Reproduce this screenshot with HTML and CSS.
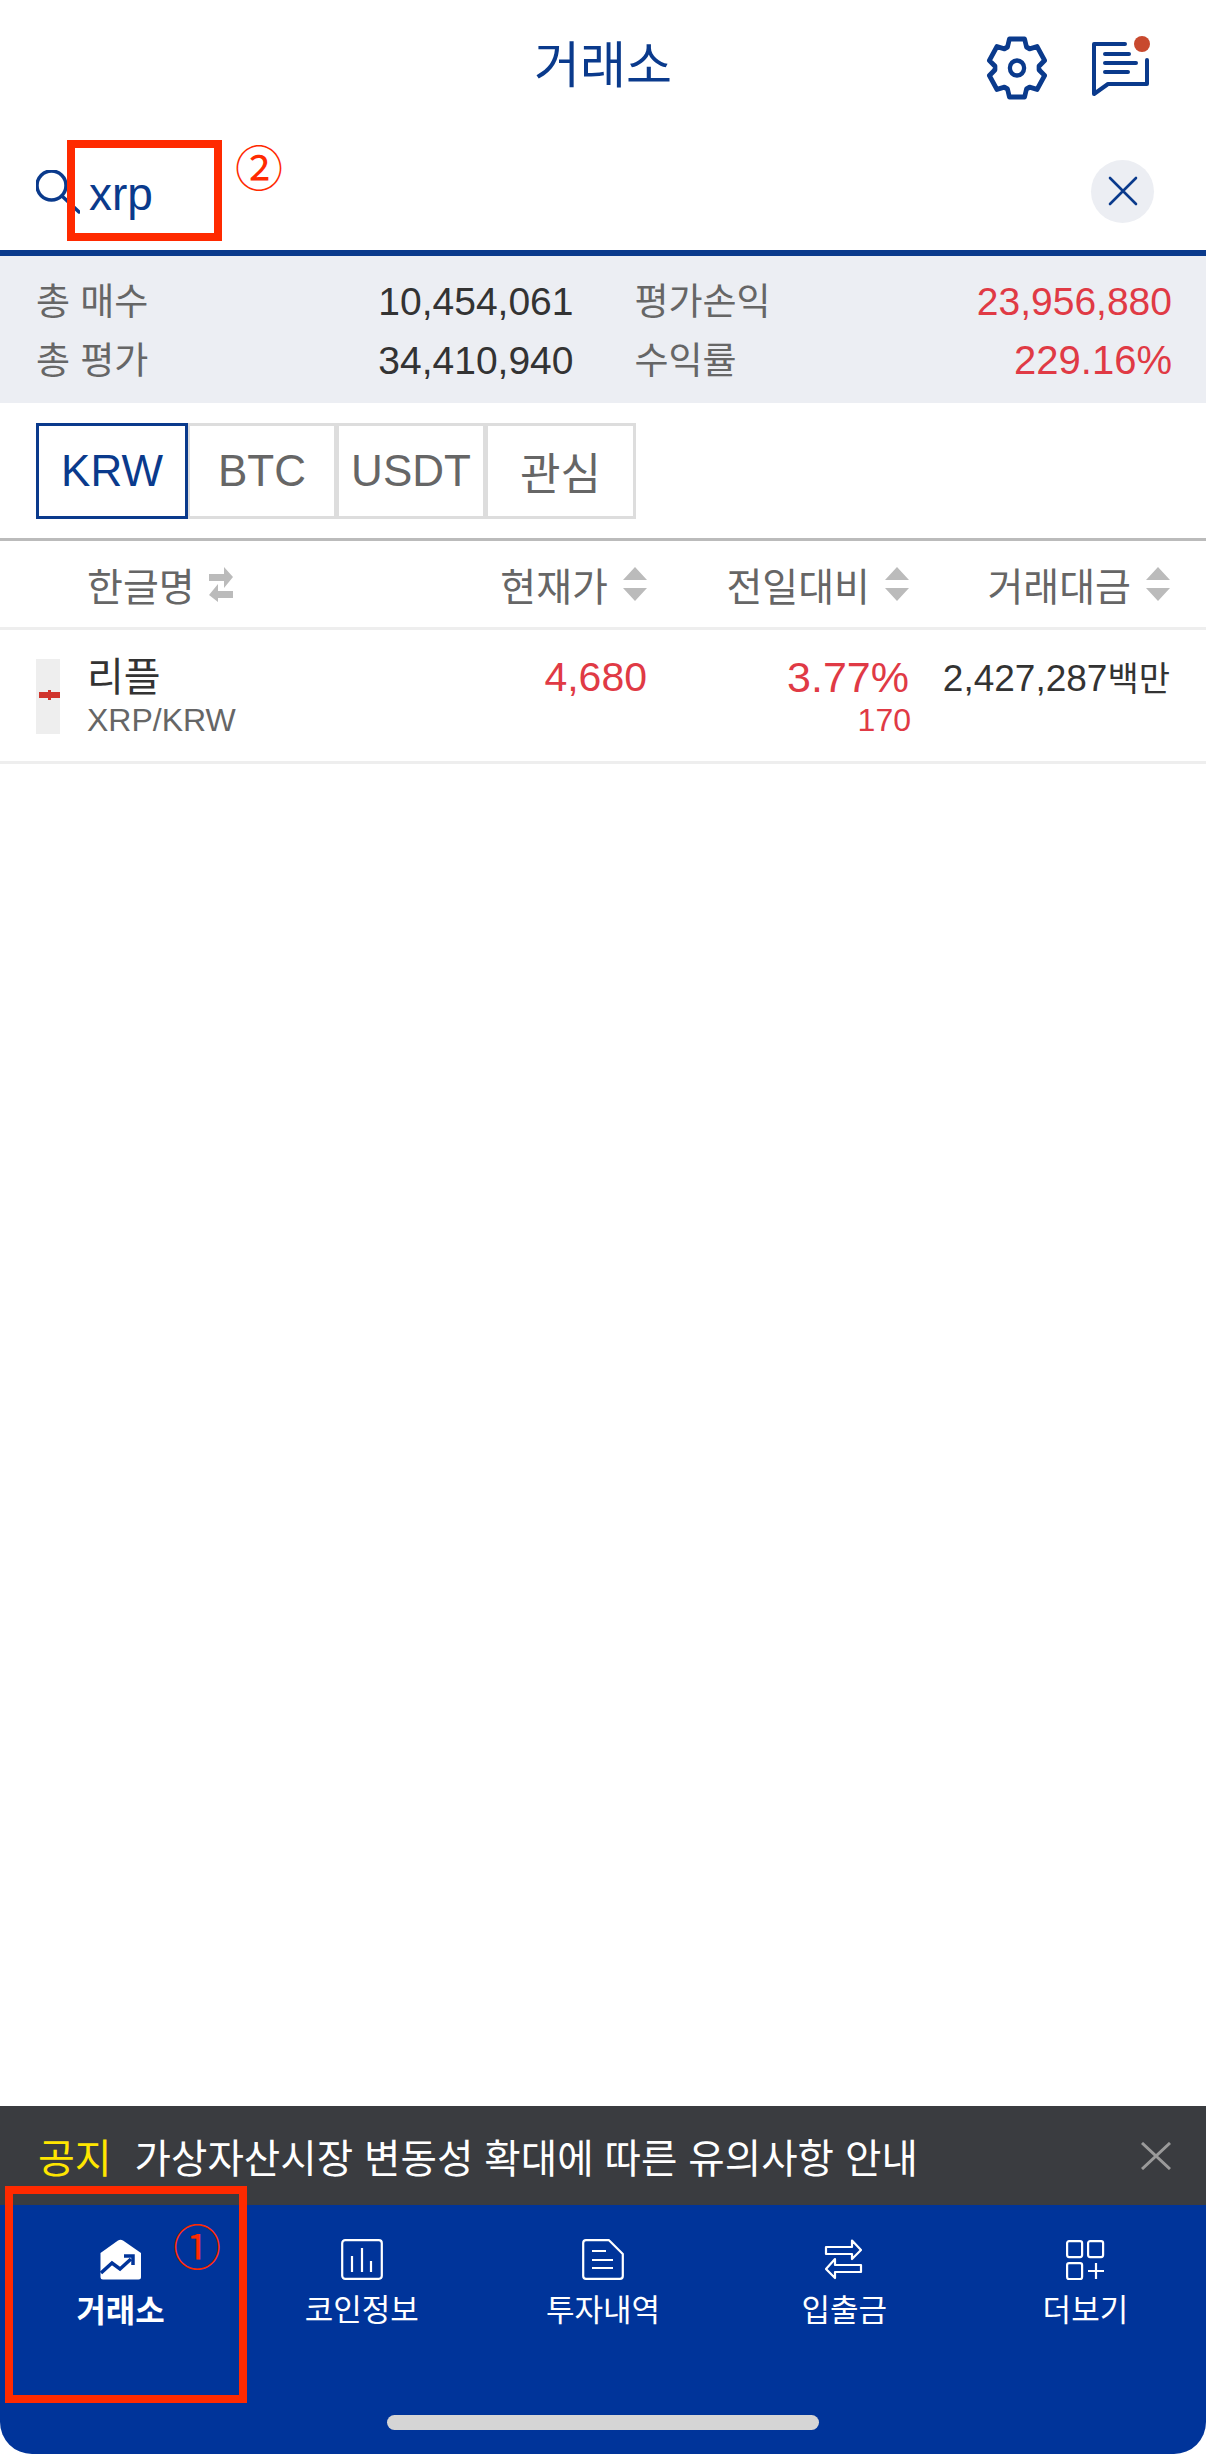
FILE: index.html
```html
<!DOCTYPE html>
<html lang="ko">
<head>
<meta charset="utf-8">
<title>거래소</title>
<link rel="stylesheet" href="styles.css">
</head>
<body>
<div class="app">
  <header class="topbar">
    <div></div>
    <h1 class="title">거래소</h1>
    <div class="top-icons">
      <svg class="gear" width="60" height="64" viewBox="0 0 60 64" fill="none" stroke="#0a3a8c" stroke-width="5" stroke-linejoin="round">
        <g transform="translate(30 32) scale(.95 1)">
          <path d="M-8 -29H8L10 -21L13.2 -19.2L21.1 -21.4L29.1 -7.6L23.2 -1.84V1.84L29.1 7.57L21.1 21.4L13.2 19.2L10 21L8 29H-8L-10 21L-13.2 19.2L-21.1 21.4L-29.1 7.6L-23.2 1.84V-1.84L-29.1 -7.57L-21.1 -21.4L-13.2 -19.2L-10 -21Z"/>
          <circle r="7.5" stroke-width="4.5"/>
        </g>
      </svg>
      <svg class="msg" width="66" height="64" viewBox="0 0 66 64" fill="none" stroke="#0a3a8c" stroke-width="4" stroke-linecap="round" stroke-linejoin="round">
        <path d="M33 8H2V58L16 48H55V24"/>
        <path d="M13 18H37M13 27H44M13 36H36"/>
        <circle cx="50" cy="8" r="8" fill="#c8492e" stroke="none"/>
      </svg>
    </div>
  </header>

  <div class="search">
    <svg class="search-icon" width="44" height="44" viewBox="0 0 44 44" fill="none" stroke="#0a3a8c" stroke-width="3.5" stroke-linecap="round">
      <circle cx="15.500" cy="15.500" r="14.500"/>
      <path d="M26 26L43 42"/>
    </svg>
    <span class="search-text">xrp</span>
    <button class="clear" type="button" aria-label="지우기">
      <svg width="30" height="30" viewBox="0 0 30 30" fill="none" stroke="#0a3a8c" stroke-width="2.6" stroke-linecap="round">
        <path d="M2 2L28 28M28 2L2 28"/>
      </svg>
    </button>
  </div>

  <section class="summary">
    <div class="stat"><span class="stat-label">총 매수</span><span class="stat-value">10,454,061</span></div>
    <div class="stat"><span class="stat-label">평가손익</span><span class="stat-value up">23,956,880</span></div>
    <div class="stat"><span class="stat-label">총 평가</span><span class="stat-value">34,410,940</span></div>
    <div class="stat"><span class="stat-label">수익률</span><span class="stat-value up rate">229.16%</span></div>
  </section>

  <nav class="tabs">
    <span class="tab active">KRW</span>
    <span class="tab">BTC</span>
    <span class="tab">USDT</span>
    <span class="tab">관심</span>
  </nav>

  <div class="table-head grid-row">
    <div class="th th-name">한글명
      <svg width="24" height="35" viewBox="0 0 24 35" fill="#bbb"><path d="M0 7H15V0L24 10L15 21V14H0ZM24 24H9V17L0 28L9 35V31H24Z"/></svg>
    </div>
    <div class="th">현재가
      <svg width="24" height="34" viewBox="0 0 24 34" fill="#bbb"><path d="M12 0L24 13H0ZM0 21H24L12 34Z"/></svg>
    </div>
    <div class="th">전일대비
      <svg width="24" height="34" viewBox="0 0 24 34" fill="#bbb"><path d="M12 0L24 13H0ZM0 21H24L12 34Z"/></svg>
    </div>
    <div class="th">거래대금
      <svg width="24" height="34" viewBox="0 0 24 34" fill="#bbb"><path d="M12 0L24 13H0ZM0 21H24L12 34Z"/></svg>
    </div>
  </div>

  <div class="coin grid-row">
    <div class="coin-name">
      <span class="mini"><span class="wick"></span><span class="candle"></span></span>
      <div class="names">
        <div class="ko">리플</div>
        <div class="pair">XRP/KRW</div>
      </div>
    </div>
    <div class="price up">4,680</div>
    <div class="change up">
      <div class="pct">3.77%</div>
      <div class="diff">170</div>
    </div>
    <div class="volume">2,427,287<span class="unit">백만</span></div>
  </div>

  <main class="empty"></main>

  <div class="notice">
    <span class="notice-tag">공지</span>
    <span class="notice-text">가상자산시장 변동성 확대에 따른 유의사항 안내</span>
    <svg class="notice-close" width="30" height="28" viewBox="0 0 30 28" fill="none" stroke="#9a9a9a" stroke-width="3"><path d="M1 1L29 27M29 1L1 27"/></svg>
  </div>

  <footer class="bottom">
    <div class="nav">
      <div class="nav-item current">
        <svg width="42" height="41" viewBox="0 0 42 41" fill="#fff">
          <path d="M18 1.5Q20.5 0 23 1.5L41 14V38Q41 40.500 38.500 40.500H3Q0.500 40.500 0.500 38V14Z"/>
          <path d="M1 34L12 24L20 30L31 20" fill="none" stroke="#00349a" stroke-width="3.500"/>
          <path d="M24 17H33V26" fill="none" stroke="#00349a" stroke-width="3.500"/>
        </svg>
        <span>거래소</span>
      </div>
      <div class="nav-item">
        <svg width="42" height="41" viewBox="0 0 42 41" fill="none" stroke="#fff" stroke-width="2.200">
          <rect x="1.200" y="1.200" width="39.600" height="38.600" rx="3"/>
          <path d="M11 17V33M21 9V33M30 22V33"/>
        </svg>
        <span>코인정보</span>
      </div>
      <div class="nav-item">
        <svg width="42" height="41" viewBox="0 0 42 41" fill="none" stroke="#fff" stroke-width="2.200" stroke-linejoin="round">
          <path d="M4 1.200H27L40.800 15V37Q40.800 39.800 38 39.800H4Q1.200 39.800 1.200 37V4Q1.200 1.200 4 1.200Z"/>
          <path d="M10 12H24M10 21H31M10 29H31"/>
        </svg>
        <span>투자내역</span>
      </div>
      <div class="nav-item">
        <svg width="42" height="41" viewBox="0 0 42 41" fill="none" stroke="#fff" stroke-width="2.200" stroke-linejoin="round">
          <path d="M3 8H29V1.500L38 11L29 20V15H3Z"/>
          <path d="M38 26H12V20L3 30L12 39V33H38Z"/>
        </svg>
        <span>입출금</span>
      </div>
      <div class="nav-item">
        <svg width="42" height="41" viewBox="0 0 42 41" fill="none" stroke="#fff" stroke-width="2.200">
          <rect x="3.100" y="2.100" width="15" height="16" rx="2"/>
          <rect x="24.100" y="2.100" width="15" height="16" rx="2"/>
          <rect x="3.100" y="24.100" width="15" height="16" rx="2"/>
          <path d="M24 32H40M32 24V40"/>
        </svg>
        <span>더보기</span>
      </div>
    </div>
    <div class="home-bar"></div>
  </footer>

  <div class="mark mark-search"></div>
  <div class="mark mark-nav"></div>
  <span class="num num-2">②</span>
  <span class="num num-1">①</span>
</div>
</body>
</html>
```
FILE: styles.css
```css
* { box-sizing: border-box; }
html, body { margin: 0; padding: 0; background: #fff; }
body { font-family: "Liberation Sans", "Noto Sans CJK KR", sans-serif; color: #333; }

.app {
  position: relative;
  width: 1206px;
  height: 2454px;
  display: flex;
  flex-direction: column;
  overflow: hidden;
  background: #fff;
}

.topbar {
  height: 126px;
  display: grid;
  grid-template-columns: 1fr auto 1fr;
  align-items: center;
}
.title { margin: 0; padding-top: 6px; font-size: 50px; font-weight: 400; color: #0a3a8c; line-height: 60px; }
.top-icons { display: flex; justify-content: flex-end; align-items: flex-end; gap: 45px; padding: 10px 48px 0 0; }
.gear { overflow: visible; }

.search { height: 124px; display: flex; align-items: center; padding: 6px 52px 0 36px; }
.search-icon { flex: none; margin-top: 2px; }
.search-text { margin-left: 9px; font-size: 46px; line-height: 50px; color: #0a3a8c; flex: 1; padding-top: 5px; }
.clear {
  width: 63px; height: 63px; border: 0; border-radius: 50%; padding: 0;
  background: #eceef3; display: flex; align-items: center; justify-content: center;
}

.summary {
  border-top: 6px solid #0a3a8c;
  background: #eceef3;
  height: 153px;
  padding: 15px 34px 0 36px;
  display: grid;
  grid-template-columns: 1fr 1fr;
  grid-auto-rows: 59px;
  column-gap: 61px;
}
.stat { display: flex; justify-content: space-between; align-items: center; }
.stat-label { font-size: 37px; color: #666; padding-bottom: 4px; }
.stat-value { font-size: 39px; color: #333; padding-top: 2px; }
.up { color: #e03a45; }
.stat-value.up { color: #e03a45; }
.stat-value.rate { font-size: 40px; }

.tabs { display: flex; padding: 20px 0 19px 36px; border-bottom: 3px solid #bbb; }
.tab {
  width: 150px; height: 96px;
  margin-left: -1px;
  display: flex; align-items: center; justify-content: center;
  border: 3px solid #ddd;
  font-size: 44px; color: #666;
}
.tab:first-child { margin-left: 0; width: 152px; }
.tab:last-child { width: 151px; }
.tab.active { border-color: #0a3a8c; color: #0a3a8c; position: relative; }

.grid-row {
  display: grid;
  grid-template-columns: 410px 200px 262px 261px;
  padding: 0 37px 0 36px;
  border-bottom: 3px solid #eee;
}
.table-head { height: 89px; align-items: center; }
.th { display: flex; justify-content: flex-end; align-items: center; gap: 15px; margin-right: -1px; font-size: 39px; color: #666; white-space: nowrap; }
.th-name { justify-content: flex-start; padding-left: 51px; gap: 14px; }

.coin { height: 134px; padding-top: 29px; }
.coin-name { display: flex; gap: 27px; }
.mini {
  width: 24px; height: 75px; background: #eee; flex: none;
  display: flex; align-items: center; justify-content: center;
  position: relative;
}
.candle { display: block; width: 21px; height: 6px; background: #d0342c; margin: 0 0 3px 3px; }
.wick { position: absolute; left: 12px; top: 31px; width: 3px; height: 10px; background: #d0342c; }
.names { margin-top: -7px; }
.ko { font-size: 40px; line-height: 50px; color: #333; }
.pair { font-size: 32px; line-height: 36px; color: #666; }
.price { text-align: right; font-size: 41px; line-height: 48px; margin: -6px -1px 0 0; color: #e03a45; }
.change { text-align: right; color: #e03a45; margin-top: -6px; }
.pct { font-size: 43px; line-height: 48px; margin-right: -1px; }
.diff { font-size: 32px; line-height: 39px; margin-right: -3px; }
.volume { text-align: right; font-size: 37px; line-height: 48px; margin: -4px -1px 0 0; color: #333; white-space: nowrap; }
.unit { font-size: 34px; }

.empty { flex: 1; }

.notice {
  height: 99px; background: #3a3c40;
  display: flex; align-items: center;
  padding: 0 35px 0 38px;
}
.notice-tag { font-size: 40px; color: #ffe600; }
.notice-text { font-size: 39.6px; color: #fff; margin-left: 23px; flex: 1; }

.bottom {
  height: 249px;
  background: #00349a;
  border-radius: 0 0 32px 32px;
  display: flex; flex-direction: column; align-items: center;
  padding-top: 34px;
}
.nav { width: 100%; display: grid; grid-template-columns: repeat(5, 1fr); }
.nav-item { display: flex; flex-direction: column; align-items: center; gap: 11px; color: #fff; font-size: 31px; line-height: 40px; }
.nav-item.current { font-weight: 700; font-size: 32px; }
.home-bar { width: 432px; height: 15px; border-radius: 8px; background: #d5d5d5; margin-top: 84px; }

.mark { position: absolute; border: 8px solid #ff2a00; }
.mark-search { left: 67px; top: 140px; width: 155px; height: 101px; }
.mark-nav { left: 5px; top: 2186px; width: 242px; height: 217px; }
.num { position: absolute; font-family: "Noto Sans CJK KR", sans-serif; font-size: 48px; line-height: 48px; color: #ff2a00; }
.num-2 { left: 235px; top: 141px; }
.num-1 { left: 173px; top: 2220px; }
```
